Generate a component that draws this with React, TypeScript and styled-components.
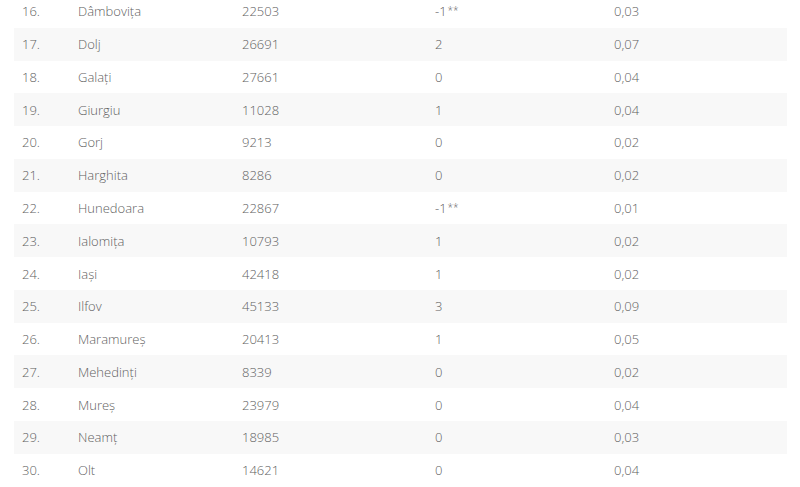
import styled, { createGlobalStyle } from "styled-components";

const GlobalStyle = createGlobalStyle`
  html, body {
    margin: 0;
    padding: 0;
    background: #fff;
  }
`;

const rows: [string, string, string, string, string][] = [
  ["16.", "Dâmbovița", "22503", "-1**", "0,03"],
  ["17.", "Dolj", "26691", "2", "0,07"],
  ["18.", "Galați", "27661", "0", "0,04"],
  ["19.", "Giurgiu", "11028", "1", "0,04"],
  ["20.", "Gorj", "9213", "0", "0,02"],
  ["21.", "Harghita", "8286", "0", "0,02"],
  ["22.", "Hunedoara", "22867", "-1**", "0,01"],
  ["23.", "Ialomița", "10793", "1", "0,02"],
  ["24.", "Iași", "42418", "1", "0,02"],
  ["25.", "Ilfov", "45133", "3", "0,09"],
  ["26.", "Maramureș", "20413", "1", "0,05"],
  ["27.", "Mehedinți", "8339", "0", "0,02"],
  ["28.", "Mureș", "23979", "0", "0,04"],
  ["29.", "Neamț", "18985", "0", "0,03"],
  ["30.", "Olt", "14621", "0", "0,04"],
];

// "-1**" -> number plus small footnote stars
const renderChange = (value: string) => {
  const stars = value.indexOf("*");
  if (stars < 0) return value;
  return (
    <>
      {value.slice(0, stars)}
      <NoteStyled>{value.slice(stars)}</NoteStyled>
    </>
  );
};

const App = () => {
  return (
    <>
      <GlobalStyle />
      <TableStyled>
        {rows.map((r, i) => (
          <RowStyled key={r[0]} striped={i % 2 === 1}>
            <CellStyled width="56px">{r[0]}</CellStyled>
            <CellStyled width="164px">{r[1]}</CellStyled>
            <CellStyled width="193px">{r[2]}</CellStyled>
            <CellStyled width="179px">{renderChange(r[3])}</CellStyled>
            <CellStyled width="auto">{r[4]}</CellStyled>
          </RowStyled>
        ))}
      </TableStyled>
    </>
  );
};

const TableStyled = styled.div`
  display: flex;
  flex-direction: column;
  width: 773px;
  margin: -5px 0 0 14px;
  font-family: "Open Sans", "Liberation Sans", sans-serif;
  font-weight: 300;
  font-size: 13px;
  color: #5f5f5f;
`;

const RowStyled = styled.div<{ striped: boolean }>`
  display: flex;
  align-items: center;
  height: 32.77px;
  padding-left: 8px;
  background-color: ${(props) => (props.striped ? "#f8f8f8" : "#fff")};
`;

const CellStyled = styled.div<{ width: string }>`
  flex: none;
  width: ${(props) => props.width};
`;

const NoteStyled = styled.span`
  font-size: 10px;
  margin-left: 1px;
  vertical-align: 2px;
`;

export default App;
